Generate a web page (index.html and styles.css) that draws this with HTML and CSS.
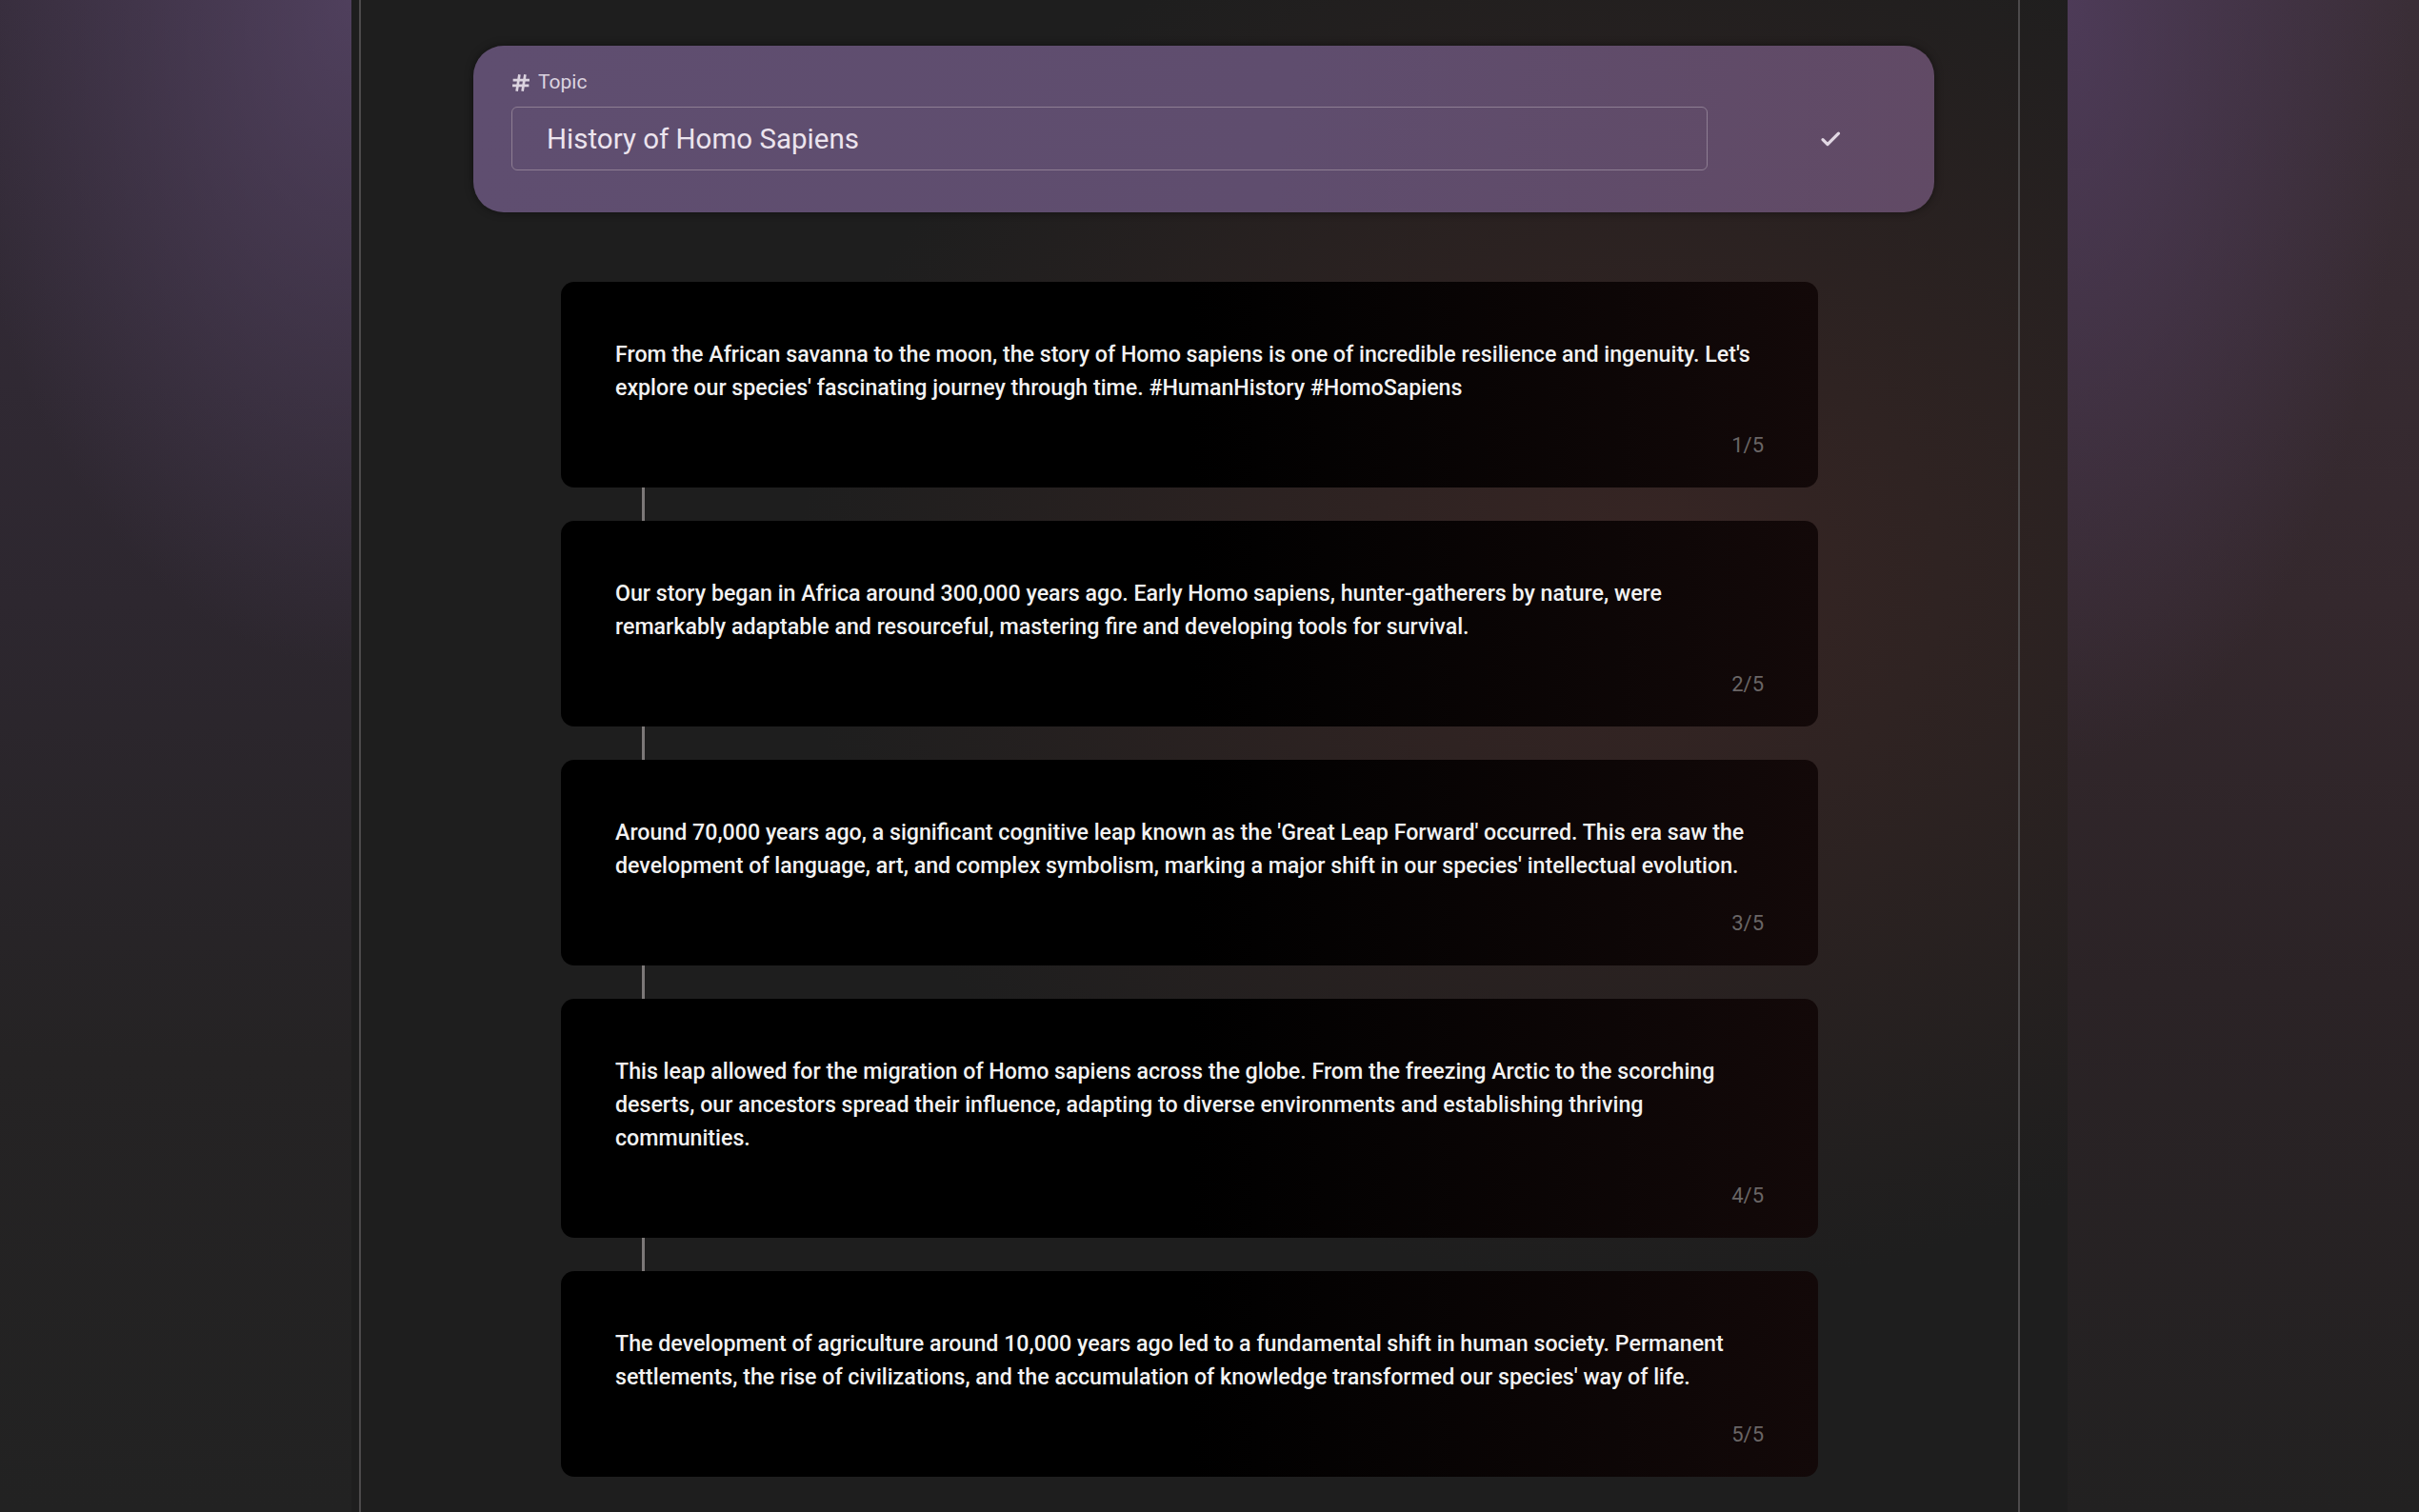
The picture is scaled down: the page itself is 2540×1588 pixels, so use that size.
FILE: index.html
```html
<!DOCTYPE html>
<html lang="en">
<head>
<meta charset="utf-8">
<title>Thread</title>
<link rel="stylesheet" href="styles.css">
</head>
<body>
<div class="side side-left"></div>
<div class="center">
  <main class="main">
    <section class="topic-card">
      <div class="topic-label">
        <svg class="hash" viewBox="0 0 20 20" width="20" height="20"><path d="M8.2 2.5 L5.8 17.5 M14.2 2.5 L11.8 17.5 M3 7.2 H17.6 M2.4 12.8 H17 " stroke="currentColor" stroke-width="2.7" fill="none" stroke-linecap="square"/></svg>
        <span>Topic</span>
      </div>
      <div class="topic-row">
        <div class="topic-input">History of Homo Sapiens</div>
        <button class="check-btn" aria-label="Confirm">
          <svg viewBox="0 0 24 24" width="26" height="26"><path d="M4.6 12.6 L9.2 17.2 L19.8 6.6" stroke="currentColor" stroke-width="3" fill="none" stroke-linecap="round" stroke-linejoin="round"/></svg>
        </button>
      </div>
    </section>

    <section class="thread">
      <article class="post">
        <p class="post-text">From the African savanna to the moon, the story of Homo sapiens is one of incredible resilience and ingenuity. Let's explore our species' fascinating journey through time. #HumanHistory #HomoSapiens</p>
        <div class="post-count">1/5</div>
      </article>
      <div class="connector"></div>
      <article class="post">
        <p class="post-text">Our story began in Africa around 300,000 years ago. Early Homo sapiens, hunter-gatherers by nature, were remarkably adaptable and resourceful, mastering fire and developing tools for survival.</p>
        <div class="post-count">2/5</div>
      </article>
      <div class="connector"></div>
      <article class="post">
        <p class="post-text">Around 70,000 years ago, a significant cognitive leap known as the 'Great Leap Forward' occurred. This era saw the development of language, art, and complex symbolism, marking a major shift in our species' intellectual evolution.</p>
        <div class="post-count">3/5</div>
      </article>
      <div class="connector"></div>
      <article class="post">
        <p class="post-text">This leap allowed for the migration of Homo sapiens across the globe. From the freezing Arctic to the scorching deserts, our ancestors spread their influence, adapting to diverse environments and establishing thriving communities.</p>
        <div class="post-count">4/5</div>
      </article>
      <div class="connector"></div>
      <article class="post">
        <p class="post-text">The development of agriculture around 10,000 years ago led to a fundamental shift in human society. Permanent settlements, the rise of civilizations, and the accumulation of knowledge transformed our species' way of life.</p>
        <div class="post-count">5/5</div>
      </article>
    </section>
  </main>
</div>
<div class="side side-right"></div>
</body>
</html>
```

FILE: styles.css
```css
html, body {
  margin: 0;
  padding: 0;
}

body {
  width: 2540px;
  height: 1588px;
  overflow: hidden;
  display: flex;
  background: #1e1e1e;
  font-family: Roboto, "Noto Sans", "Liberation Sans", sans-serif;
  color: #eee;
}

.side {
  width: 369px;
  flex: 0 0 369px;
  height: 100%;
}

.side-left {
  background:
    radial-gradient(ellipse 420px 700px at 100% 0%, rgba(88, 70, 104, 0.75), rgba(88, 70, 104, 0) 100%),
    linear-gradient(180deg, #352c3a 0%, #2d272f 40%, #252324 70%, #222222 100%),
    #222;
}

.side-right {
  background:
    radial-gradient(ellipse 360px 800px at 0% 0%, rgba(82, 62, 96, 0.8), rgba(82, 62, 96, 0) 100%),
    linear-gradient(180deg, #3a2e37 0%, #34282d 40%, #2b2326 65%, #222121 100%),
    #222;
}

.center {
  flex: 1 1 auto;
  display: flex;
  padding: 0 50px 0 8px;
  background:
    radial-gradient(ellipse 900px 750px at 76% 38%, rgba(64, 40, 38, 0.75), rgba(64, 40, 38, 0) 100%),
    #1e1e1e;
}

.main {
  flex: 1 1 auto;
  border-left: 2px solid #4c4a4b;
  border-right: 2px solid #4c4a4b;
  display: flex;
  flex-direction: column;
}

/* Topic card */
.topic-card {
  margin: 48px 0 0 118px;
  width: 1534px;
  box-sizing: border-box;
  padding: 26px 40px 44px 40px;
  border-radius: 32px;
  background: linear-gradient(100deg, #5f4e70 0%, #5f4d6e 55%, #614a65 100%);
  box-shadow: 0 0 10px rgba(0, 0, 0, 0.45);
}

.topic-label {
  display: flex;
  align-items: center;
  gap: 8px;
  height: 25px;
  font-size: 21px;
  line-height: 25px;
  color: #dcd4e0;
}

.hash {
  color: #dcd4e0;
  display: block;
}

.topic-row {
  margin-top: 13px;
  display: flex;
  align-items: center;
  gap: 105px;
}

.topic-input {
  width: 1256px;
  height: 67px;
  box-sizing: border-box;
  border: 1.5px solid #8e7e93;
  border-radius: 6px;
  padding: 0 0 0 36px;
  display: flex;
  align-items: center;
  font-size: 29.5px;
  color: #ece4ee;
}

.check-btn {
  width: 48px;
  height: 48px;
  border: 0;
  padding: 0;
  background: transparent;
  color: #e2d8e4;
  display: flex;
  align-items: center;
  justify-content: center;
}

/* Thread */
.thread {
  margin: 73px 0 0 210px;
  width: 1320px;
  display: flex;
  flex-direction: column;
}

.post {
  box-sizing: border-box;
  padding: 59px 50px 27px 57px;
  border-radius: 14px;
  background: linear-gradient(90deg, #000 0%, #000 50%, #130909 100%);
}

.post-text {
  margin: 0;
  font-size: 23.2px;
  line-height: 35px;
  font-weight: 500;
  color: #f2f2f2;
}

.post-count {
  margin-top: 25px;
  padding-right: 7px;
  text-align: right;
  font-size: 22px;
  line-height: 35px;
  color: #6a6666;
}

.connector {
  width: 3px;
  height: 35px;
  margin-left: 85px;
  background: #7c7878;
}
```
